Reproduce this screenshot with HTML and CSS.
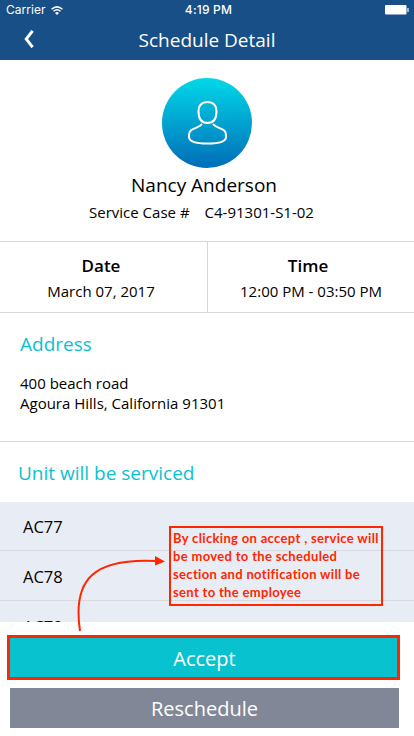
FILE: index.html
```html
<!DOCTYPE html>
<html lang="en">
<head>
<meta charset="utf-8">
<title>Schedule Detail</title>
<link rel="stylesheet" href="styles.css">
</head>
<body>
<div class="screen">
  <header class="header">
    <div class="status">
      <div class="carrier"><span>Carrier</span>
        <svg class="wifi" width="12" height="9" viewBox="0 0 12 9" fill="none" stroke="#fff" stroke-width="1.5"><path d="M.5 3.2Q6-1.5 11.5 3.2M2.5 5.3Q6 2.3 9.5 5.3"/><path d="M4 6.9Q6 5.2 8 6.9L6 9z" fill="#fff" stroke="none"/></svg>
      </div>
      <span class="clock">4:19 PM</span>
      <svg class="battery" width="24" height="10" viewBox="0 0 24 10" fill="#fff"><rect width="21.5" height="9.5" rx="1"/><rect x="22.4" y="3" width="1.2" height="4" rx=".6"/></svg>
    </div>
    <div class="nav">
      <svg class="back" width="10" height="18" viewBox="0 0 10 18" fill="none" stroke="#fff" stroke-width="2.9"><path d="M8.6.8 2.200 9l6.400 8.200"/></svg>
      <h1 class="title">Schedule Detail</h1>
    </div>
  </header>
  <section class="profile">
    <svg class="avatar" width="90" height="90" viewBox="0 0 90 90">
      <defs><linearGradient id="sky" x1="0" y1="0" x2="0" y2="1"><stop offset="0" stop-color="#02d8e8"/><stop offset="1" stop-color="#006db8"/></linearGradient></defs>
      <circle cx="45" cy="45" r="45" fill="url(#sky)"/>
      <g fill="none" stroke="#fff" stroke-width="2" stroke-linecap="round" stroke-linejoin="round"><path d="M45.500 24c-6.500 0-9 3-9 9.500 0 7 3 11.500 9 11.500s9-4.500 9-11.500c0-6.500-2.500-9.500-9-9.500z"/><path d="M39.500 46.500c-1.500 2-4 2.500-8 4.300-4 1.700-4.500 3.700-4.500 8.200 0 5 8.500 6.500 18.500 6.500s18.500-1.500 18.500-6.500c0-4.500-.5-6.500-4.500-8.200-4-1.800-6.500-2.300-8-4.300"/></g>
    </svg>
    <h2 class="name">Nancy Anderson</h2>
    <p class="case"><span>Service Case #</span><span>C4-91301-S1-02</span></p>
  </section>
  <section class="slots">
    <div class="slot"><h3>Date</h3><p class="date">March 07, 2017</p></div>
    <div class="slot"><h3>Time</h3><p class="time">12:00 PM - 03:50 PM</p></div>
  </section>
  <section class="address">
    <h2 class="heading">Address</h2>
    <p>400 beach road<br>Agoura Hills, California 91301</p>
  </section>
  <h2 class="heading units-heading">Unit will be serviced</h2>
  <ul class="units"><li>AC77</li><li>AC78</li><li>AC79</li></ul>
  <div class="actions">
    <button class="accept">Accept</button>
    <button class="reschedule">Reschedule</button>
  </div>
  <svg class="arrow" width="90" height="80" viewBox="0 0 90 80"><path d="M5 76C-3 23 20 3 81 6" fill="none" stroke="#ff2600" stroke-width="2"/><path d="m80 1 10 5.500-10 4z" fill="#ff2600"/></svg>
  <div class="note"><span>By clicking on accept , service will</span><span>be moved to the scheduled</span><span>section and notification will be</span><span>sent to the employee</span></div>
</div>
</body>
</html>
```
FILE: styles.css
```css
* { box-sizing: border-box; }
body, h1, h2, h3, p, ul { margin: 0; padding: 0; }
body { background: #fff; color: #000; font-family: "Open Sans", sans-serif; }
h1, h2 { font-weight: 400; }
.screen { position: relative; width: 414px; height: 736px; overflow: hidden; display: flex; flex-direction: column; }
.header { height: 60px; background: #174f86; color: #fff; }
.status { height: 20px; padding: 0 6px; display: grid; grid-template-columns: 1fr auto 1fr; align-items: center; font: 12px/20px Inter, sans-serif; }
.carrier { display: flex; align-items: center; gap: 5px; letter-spacing: .05px; }
.clock { font-weight: 500; letter-spacing: .2px; padding-left: 3px; }
.battery { justify-self: end; margin-right: -1px; }
.nav { height: 40px; display: grid; grid-template-columns: 34px 1fr 34px; align-items: center; }
.back { justify-self: end; position: relative; top: -1px; }
.title { text-align: center; font-size: 19px; line-height: 40px; }
.profile { height: 181px; padding-top: 18px; display: flex; flex-direction: column; align-items: center; }
.name { margin: 4px 6px 0 0; font-size: 19px; line-height: 26px; }
.case { margin: 4px 11px 0 0; display: flex; gap: 15px; font-size: 15px; line-height: 20px; }
.slots { height: 72px; display: grid; grid-template-columns: 208px 206px; border: solid #d8d8d8; border-width: 1px 0; }
.slot { padding-top: 12px; text-align: center; }
.slot:first-child { border-right: 1px solid #d8d8d8; padding-right: 5px; }
.slot h3 { font-size: 17px; font-weight: 600; line-height: 24px; }
.slot p { margin-top: 3px; font-size: 15px; line-height: 20px; }
.slot:last-child h3 { padding-right: 6px; }
.address { height: 129px; padding: 17px 20px 0; border-bottom: 1px solid #d8d8d8; }
.heading { color: #0bc1cf; font-size: 19px; line-height: 28px; }
.address p { margin-top: 15px; font-size: 15px; line-height: 20px; }
.units-heading { height: 60px; padding: 17px 18px 0; }
.units { height: 120px; overflow: hidden; background: #e8ecf4; list-style: none; }
.units li { height: 50px; padding-left: 23px; border-bottom: 1px solid #d8dade; font-size: 16.500px; line-height: 51px; }
.units li:first-child { height: 49px; line-height: 49px; }
.actions { padding: 13px 14px 0 7px; display: flex; flex-direction: column; gap: 8px; }
.actions button { border: 0; border-radius: 0; padding: 0; color: #fff; font: 20px "Open Sans", sans-serif; }
.actions .accept { height: 45px; border: 3px solid #ff2600; padding: 1px 0 0 2px; background: #09c2cf; }
.actions .reschedule { height: 40px; margin: 0 1px 0 3px; background: #818797; }
.arrow { position: absolute; left: 75px; top: 555px; }
.note { position: absolute; left: 169px; top: 526px; width: 214px; height: 80px; padding: 1px 0 0 2px; border: 2px solid #ff2600; color: #ff2600; font: 700 13px/18px Lato, sans-serif; letter-spacing: .33px; }
.note span { display: block; width: max-content; }
```
